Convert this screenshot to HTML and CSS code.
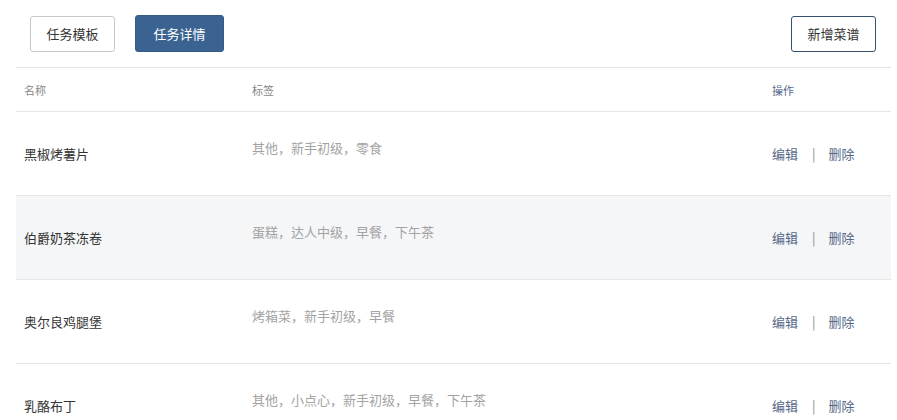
FILE: index.html
```html
<!DOCTYPE html>
<html lang="zh">
<head>
<meta charset="utf-8">
<link rel="stylesheet" href="styles.css">
</head>
<body>
<div class="toolbar">
  <div class="tabs">
    <button class="btn btn-default">任务模板</button>
    <button class="btn btn-primary">任务详情</button>
  </div>
  <button class="btn btn-outline">新增菜谱</button>
</div>
<div class="table">
  <div class="row head">
    <div class="c-name">名称</div>
    <div class="c-tags">标签</div>
    <div class="c-ops">操作</div>
  </div>
  <div class="row">
    <div class="c-name">黑椒烤薯片</div>
    <div class="c-tags tags">其他，新手初级，零食</div>
    <div class="c-ops"><a>编辑</a><span class="sep">|</span><a>删除</a></div>
  </div>
  <div class="row alt">
    <div class="c-name">伯爵奶茶冻卷</div>
    <div class="c-tags tags">蛋糕，达人中级，早餐，下午茶</div>
    <div class="c-ops"><a>编辑</a><span class="sep">|</span><a>删除</a></div>
  </div>
  <div class="row">
    <div class="c-name">奥尔良鸡腿堡</div>
    <div class="c-tags tags">烤箱菜，新手初级，早餐</div>
    <div class="c-ops"><a>编辑</a><span class="sep">|</span><a>删除</a></div>
  </div>
  <div class="row">
    <div class="c-name">乳酪布丁</div>
    <div class="c-tags tags">其他，小点心，新手初级，早餐，下午茶</div>
    <div class="c-ops"><a>编辑</a><span class="sep">|</span><a>删除</a></div>
  </div>
</div>
</body>
</html>
```
FILE: styles.css
```css
* { box-sizing: border-box; }
html, body { margin: 0; padding: 0; background: #fff; }
body {
  font-family: "Noto Sans CJK SC", "Noto Sans", sans-serif;
  color: #333;
  width: 897px;
  height: 420px;
  overflow: hidden;
}
.toolbar {
  display: flex;
  justify-content: space-between;
  align-items: center;
  height: 67px;
  padding: 0 21px 0 30px;
}
.tabs { display: flex; gap: 20px; align-items: center; }
.btn {
  font-family: inherit;
  font-size: 13px;
  height: 36px;
  padding: 0;
  border-radius: 3px;
  cursor: pointer;
}
.btn-default {
  width: 85px;
  background: #fff;
  border: 1px solid #c9c9c9;
  color: #333;
}
.btn-primary {
  width: 89px;
  height: 37px;
  background: #3a6391;
  border: 1px solid #355b86;
  color: #fff;
}
.btn-outline {
  width: 85px;
  background: #fff;
  border: 1.5px solid #34506d;
  color: #333;
}
.table {
  margin: 0 6px 0 16px;
  border-top: 1px solid #e3e3e3;
}
.row {
  display: grid;
  grid-template-columns: 236px 520px 1fr;
  align-items: center;
  height: 84px;
  border-bottom: 1px solid #e6e6e6;
  font-size: 13px;
}
.row.head {
  height: 44px;
  font-size: 11px;
  color: #888;
}
.row.alt { background: #f5f6f8; }
.c-name { padding-left: 8px; color: #333; }
.head .c-name { color: #888; }
.tags { color: #a3a3a3; margin-bottom: 12px; }
.c-ops { display: flex; align-items: center; color: #56688a; }
.c-ops a { color: #56688a; }
.sep { color: #8a8a8a; margin: 0 13px 0 14px; }
```
